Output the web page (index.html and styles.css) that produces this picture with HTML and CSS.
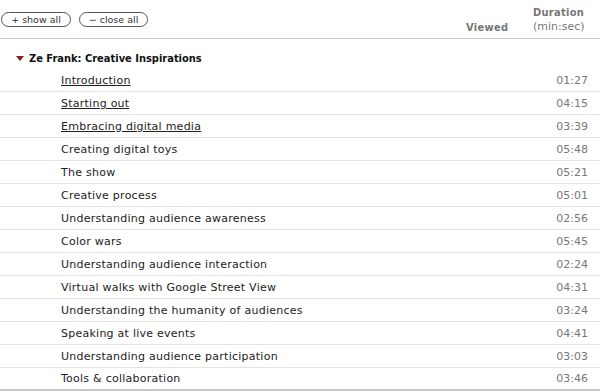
FILE: index.html
```html
<!DOCTYPE html>
<html lang="en">
<head>
    <meta charset="UTF-8">
    <title>Course contents</title>
    <link rel="stylesheet" href="styles.css">
</head>
<body>
    <div class="toc">
        <!-- Header -->
        <div class="toc-header">
            <div class="toggle-buttons">
                <button class="pill-btn show-btn">+ show all</button>
                <button class="pill-btn close-btn">&minus; close all</button>
            </div>
            <div class="col-viewed">Viewed</div>
            <div class="col-duration">
                <div class="col-title">Duration</div>
                <div class="col-sub">(min:sec)</div>
            </div>
        </div>

        <!-- Chapter -->
        <div class="chapter-title">
            <span class="arrow"></span>
            Ze Frank: Creative Inspirations
        </div>

        <ul class="movie-list">
            <li class="movie"><a class="movie-name linked" href="#">Introduction</a><span class="movie-time">01:27</span></li>
            <li class="movie"><a class="movie-name linked" href="#">Starting out</a><span class="movie-time">04:15</span></li>
            <li class="movie"><a class="movie-name linked" href="#">Embracing digital media</a><span class="movie-time">03:39</span></li>
            <li class="movie"><span class="movie-name">Creating digital toys</span><span class="movie-time">05:48</span></li>
            <li class="movie"><span class="movie-name">The show</span><span class="movie-time">05:21</span></li>
            <li class="movie"><span class="movie-name">Creative process</span><span class="movie-time">05:01</span></li>
            <li class="movie"><span class="movie-name">Understanding audience awareness</span><span class="movie-time">02:56</span></li>
            <li class="movie"><span class="movie-name">Color wars</span><span class="movie-time">05:45</span></li>
            <li class="movie"><span class="movie-name">Understanding audience interaction</span><span class="movie-time">02:24</span></li>
            <li class="movie"><span class="movie-name">Virtual walks with Google Street View</span><span class="movie-time">04:31</span></li>
            <li class="movie"><span class="movie-name">Understanding the humanity of audiences</span><span class="movie-time">03:24</span></li>
            <li class="movie"><span class="movie-name">Speaking at live events</span><span class="movie-time">04:41</span></li>
            <li class="movie"><span class="movie-name">Understanding audience participation</span><span class="movie-time">03:03</span></li>
            <li class="movie last"><span class="movie-name">Tools &amp; collaboration</span><span class="movie-time">03:46</span></li>
        </ul>
    </div>
</body>
</html>
```

FILE: styles.css
```css
* {
    margin: 0;
    padding: 0;
    box-sizing: border-box;
}

body {
    font-family: 'DejaVu Sans', Verdana, sans-serif;
    font-size: 11px;
    color: #222;
    background: white;
}

.toc {
    width: 600px;
}

.toc-header {
    display: flex;
    align-items: flex-end;
    height: 39px;
    border-bottom: 1px solid #c8c8c8;
    padding-bottom: 4px;
}

.toggle-buttons {
    flex: 1;
    display: flex;
    gap: 8px;
    align-self: flex-start;
    padding-top: 12px;
    padding-left: 1px;
}

.pill-btn {
    font-family: inherit;
    font-size: 9.5px;
    color: #333;
    background: white;
    border: 1px solid #555;
    border-radius: 8px;
    height: 15px;
    padding: 0;
    line-height: 13px;
    text-align: center;
}

.show-btn {
    width: 70px;
}

.close-btn {
    width: 69px;
}

.col-viewed {
    width: 67px;
    font-family: 'DejaVu Sans Condensed', 'DejaVu Sans', sans-serif;
    font-weight: bold;
    color: #777;
    letter-spacing: 0.3px;
}

.col-duration {
    width: 67px;
    color: #777;
    line-height: 14px;
}

.col-title {
    font-family: 'DejaVu Sans Condensed', 'DejaVu Sans', sans-serif;
    font-weight: bold;
    letter-spacing: 0.3px;
}

.chapter-title {
    display: flex;
    align-items: center;
    height: 30px;
    padding-top: 8px;
    padding-left: 16px;
    font-family: 'DejaVu Sans Condensed', 'DejaVu Sans', sans-serif;
    font-weight: bold;
    color: #111;
}

.arrow {
    width: 0;
    height: 0;
    border-left: 4px solid transparent;
    border-right: 4px solid transparent;
    border-top: 5px solid #8b1a1a;
    margin-right: 5px;
}

.movie-list {
    list-style: none;
}

.movie {
    display: flex;
    align-items: center;
    height: 23px;
    border-bottom: 1px solid #e2e2e2;
    padding-left: 61px;
    padding-right: 12px;
}

.movie.last {
    border-bottom: 2px solid #c8c8c8;
}

.movie-name {
    flex: 1;
    color: #222;
    text-decoration: none;
    letter-spacing: 0.25px;
}

.movie-name.linked {
    text-decoration: underline;
}

.movie-time {
    color: #777;
}
```
